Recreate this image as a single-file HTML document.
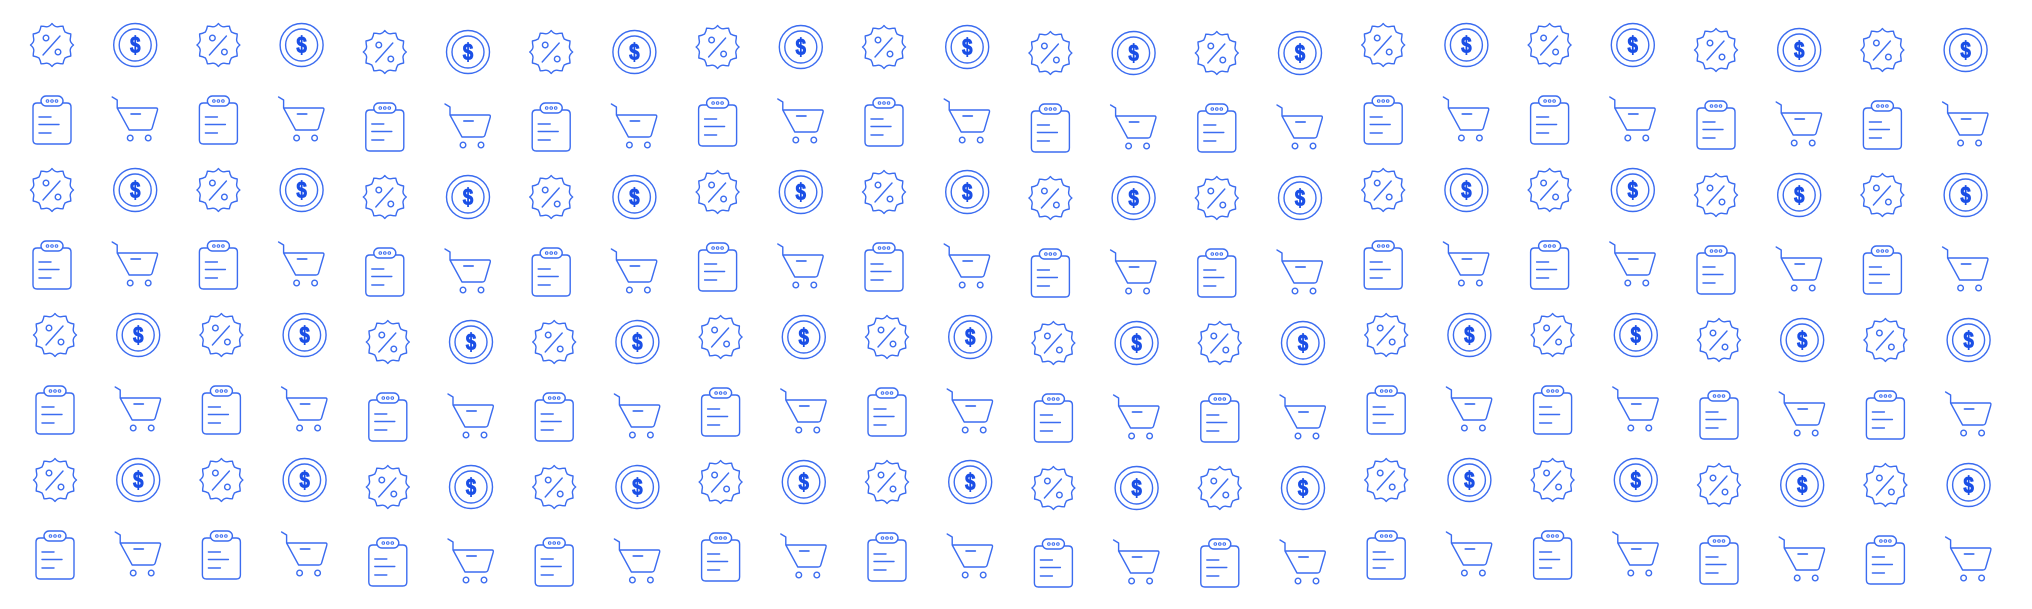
<!DOCTYPE html>
<html><head><meta charset="utf-8"><style>
html,body{margin:0;padding:0;background:#fff;width:2032px;height:609px;overflow:hidden}
svg{display:block}
</style></head><body>
<svg width="2032" height="609" viewBox="0 0 2032 609" xmlns="http://www.w3.org/2000/svg">
<defs>
<g id="badge" fill="none" stroke="#3b6cf0" stroke-width="1.4" stroke-linejoin="round" stroke-linecap="round">
<path d="M0,-21.5 Q2.7,-18 5.6,-18.2 Q8.8,-18.8 11,-18.8 Q11.6,-15.4 13,-13 Q15.4,-11.6 18.8,-11 Q18.8,-8.8 18.2,-5.6 Q18,-2.7 21.5,0 Q18,2.7 18.2,5.6 Q18.8,8.8 18.8,11 Q15.4,11.6 13,13 Q11.6,15.4 11,18.8 Q8.8,18.8 5.6,18.2 Q2.7,18 0,21.5 Q-2.7,18 -5.6,18.2 Q-8.8,18.8 -11,18.8 Q-11.6,15.4 -13,13 Q-15.4,11.6 -18.8,11 Q-18.8,8.8 -18.2,5.6 Q-18,2.7 -21.5,0 Q-18,-2.7 -18.2,-5.6 Q-18.8,-8.8 -18.8,-11 Q-15.4,-11.6 -13,-13 Q-11.6,-15.4 -11,-18.8 Q-8.8,-18.8 -5.6,-18.2 Q-2.7,-18 0,-21.5 Z"/>
<circle cx="-6" cy="-7" r="2.8"/><circle cx="6" cy="7" r="2.8"/>
<line x1="-9" y1="10" x2="8" y2="-9"/>
</g>
<g id="dollar">
<circle r="21.5" fill="none" stroke="#3b6cf0" stroke-width="1.4"/>
<circle r="16" fill="none" stroke="#3b6cf0" stroke-width="1.4"/>
<text transform="scale(0.82,1)" x="0" y="8" text-anchor="middle" font-family="Liberation Sans, sans-serif" font-weight="bold" font-size="23" fill="#1a4fe6" stroke="#1a4fe6" stroke-width="0.9">$</text>
</g>
<g id="clip" fill="none" stroke="#3b6cf0" stroke-width="1.4" stroke-linecap="round">
<path d="M-11,-17 L-15,-17 Q-19,-17 -19,-13 L-19,20 Q-19,24 -15,24 L15,24 Q19,24 19,20 L19,-13 Q19,-17 15,-17 L11,-17"/>
<rect x="-11" y="-24" width="22" height="10" rx="5"/>
<circle cx="-4.5" cy="-19" r="1.3" stroke-width="1"/><circle cx="0" cy="-19" r="1.3" stroke-width="1"/><circle cx="4.5" cy="-19" r="1.3" stroke-width="1"/>
<line x1="-13" y1="-3" x2="-1" y2="-3"/><line x1="-13" y1="4.5" x2="7" y2="4.5"/><line x1="-13" y1="13" x2="-1" y2="13"/>
</g>
<g id="cart" fill="none" stroke="#3b6cf0" stroke-width="1.4" stroke-linecap="round" stroke-linejoin="round">
<path d="M-23,-23 L-18,-20 L-18,-12 L21,-12 Q23,-12 22,-9 L17,8 Q16.5,10 14,10 L-6,10 L-18,-12"/>
<line x1="-4" y1="-6" x2="5" y2="-6" stroke-width="2" stroke="#5a84f2"/>
<circle cx="-5" cy="18" r="2.8"/><circle cx="13" cy="18" r="2.8"/>
</g>
<g id="pair">
<use href="#badge"/><use href="#dollar" x="83.2"/>
<use href="#clip" y="75"/><use href="#cart" x="83.2" y="75"/>
</g>
<g id="block"><use href="#pair"/><use href="#pair" x="166.4"/></g>
<g id="strip"><use href="#block"/><use href="#block" y="145"/><use href="#block" x="3" y="290"/><use href="#block" x="3" y="435"/></g>
</defs>
<g transform="translate(52,45)">
<use href="#strip" x="0" y="0"/>
<use href="#strip" x="332.8" y="7"/>
<use href="#strip" x="665.6" y="2"/>
<use href="#strip" x="998.4" y="8"/>
<use href="#strip" x="1331.2" y="0"/>
<use href="#strip" x="1664" y="5"/>
</g>
</svg>
</body></html>
